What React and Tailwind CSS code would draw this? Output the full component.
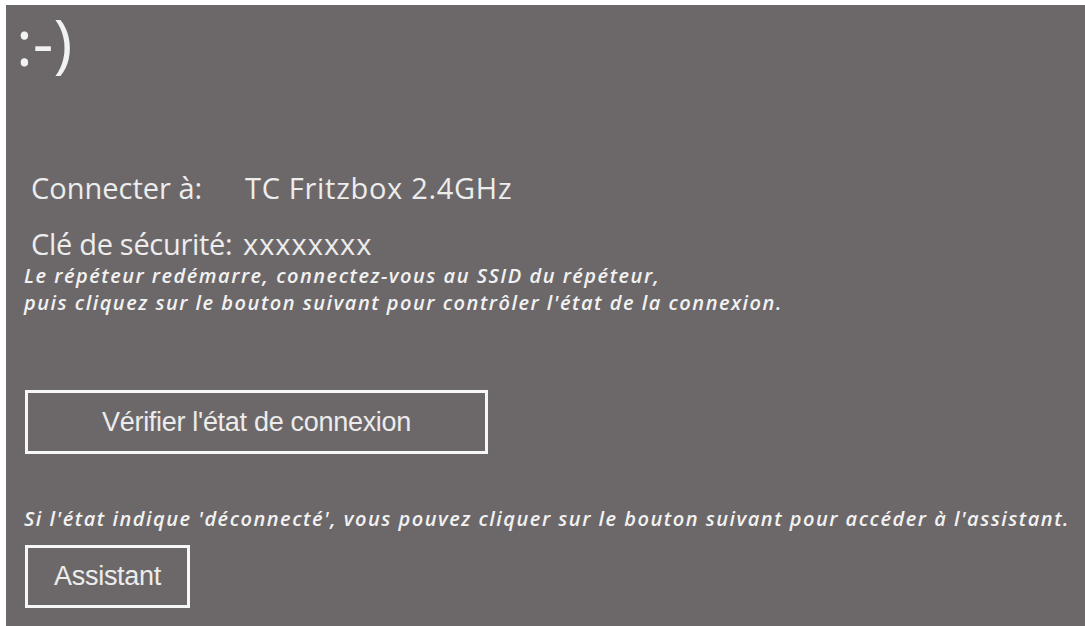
const sans = { fontFamily: '"Open Sans", "Noto Sans", sans-serif' };

function OutlineButton({ children, className }) {
  return (
    <button
      className={`flex items-center justify-center border-[3px] border-[#f7f7f7] text-[27px] tracking-[-0.3px] text-[#ececec] ${className}`}
      style={{ fontFamily: '"Liberation Sans", Arial, sans-serif' }}
    >
      {children}
    </button>
  );
}

export default function App() {
  return (
    <div className="h-[626px] w-[1085px] bg-white pl-[6px] pt-[5px]">
      <div className="flex h-full flex-col bg-[#6c6869] text-[#f2f2f2]" style={sans}>
        {/* status smiley */}
        <div className="ml-[10px] mt-[5px] text-[64px] leading-[64px]">:-)</div>

        {/* network details */}
        <div className="ml-[25px] mt-[94px] grid grid-cols-[214px_auto] gap-y-[16px] text-[29px] leading-[40px] text-[#ededed]">
          <span>Connecter à:</span>
          <span className="tracking-[0.7px]">TC Fritzbox 2.4GHz</span>
          <span className="tracking-[-0.3px]">Clé de sécurité:</span>
          <span className="-ml-[2px] tracking-[1px]">xxxxxxxx</span>
        </div>

        <p className="-mt-[2px] ml-[18px] text-[20px] font-semibold italic leading-[27px] tracking-[1.5px]">
          Le répéteur redémarre, connectez-vous au SSID du répéteur,
          <br />
          puis cliquez sur le bouton suivant pour contrôler l'état de la connexion.
        </p>

        <OutlineButton className="ml-[19px] mt-[74px] h-[64px] w-[463px]">
          Vérifier l'état de connexion
        </OutlineButton>

        <p className="ml-[18px] mt-[51px] text-[20px] font-semibold italic leading-[27px] tracking-[1.5px]">
          Si l'état indique 'déconnecté', vous pouvez cliquer sur le bouton suivant pour accéder à l'assistant.
        </p>

        <OutlineButton className="ml-[19px] mt-[13px] h-[63px] w-[165px]">Assistant</OutlineButton>
      </div>
    </div>
  );
}
